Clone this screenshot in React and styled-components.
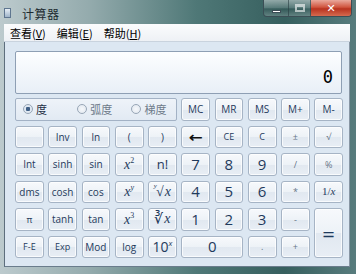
import React from 'react';
import styled, {createGlobalStyle} from 'styled-components';

const GlobalStyle = createGlobalStyle`
    html, body {
        margin: 0;
        padding: 0;
        background: #ffffff;
    }
    * {
        box-sizing: border-box;
    }
`

const Window = styled.div`
    width: 356px;
    height: 274px;
    display: flex;
    flex-direction: column;
    padding: 0 6px 7px 4px;
    background: linear-gradient(90deg, #bccacd 0%, #94abad 25%, #4f7877 55%, #365f5e 80%, #587c7d 100%);
    font-family: "Noto Sans CJK SC", "Noto Sans", sans-serif;
    overflow: hidden;
`
const TitleBar = styled.div`
    height: 24px;
    display: flex;
    align-items: flex-start;
    margin-left: -4px;
    margin-right: -6px;
`
const TitleIcon = styled.div`
    width: 7px;
    height: 10px;
    margin: 8px 0 0 4px;
    background: linear-gradient(#e6eef6, #9fb4c9);
    border: 1px solid #5f7690;
`
const TitleText = styled.div`
    margin: 5px 0 0 11px;
    font-size: 12px;
    color: #1c2a30;
    letter-spacing: 0.5px;
`
const Caption = styled.div`
    margin-left: auto;
    margin-right: 4px;
    display: flex;
    height: 17px;
    border: 1px solid #3b4e55;
    border-top: none;
    border-radius: 0 0 4px 4px;
    overflow: hidden;
`
const CaptionButton = styled.div`
    width: ${(props) => props.$w}px;
    display: flex;
    align-items: center;
    justify-content: center;
    color: #fff;
    font: bold 11px "DejaVu Sans", sans-serif;
    background: ${(props) => props.$close
        ? 'linear-gradient(#e9a99c 0%, #d0553f 45%, #b8331f 55%, #d46a4f 100%)'
        : 'linear-gradient(rgba(255,255,255,0.45) 0%, rgba(255,255,255,0.15) 50%, rgba(0,0,0,0.08) 55%, rgba(255,255,255,0.2) 100%)'};
    &:not(:last-child) {
        border-right: 1px solid rgba(40,60,65,0.6);
    }
`
const MinLine = styled.div`
    width: 9px;
    height: 3px;
    margin-top: 6px;
    background: #fff;
    border: 1px solid #3c4c55;
`
const MaxBox = styled.div`
    width: 10px;
    height: 8px;
    border: 2px solid rgba(255,255,255,0.6);
    border-top-width: 3px;
`
const MenuBar = styled.div`
    height: 18px;
    display: flex;
    align-items: center;
    padding-left: 6px;
    gap: 11px;
    background: linear-gradient(#fbfcfd, #eef1f5);
    border-bottom: 1px solid #c9d3de;
    font-size: 11px;
    color: #000;
`
const MenuItem = styled.span`
    u {
        text-decoration: underline;
        text-underline-offset: 1px;
    }
`
const Client = styled.div`
    flex: 1;
    display: flex;
    flex-direction: column;
    gap: 4px;
    padding: 9px 7px 0 10px;
    background: #dce7f2;
    border-left: 1px solid #5d6e7d;
    border-bottom: 1px solid #6a7c8c;
    border-right: 1px solid #8896a4;
`
const Display = styled.div`
    height: 43px;
    display: flex;
    align-items: flex-end;
    justify-content: flex-end;
    padding: 0 8px 6px 0;
    border: 1px solid #8e9fb4;
    border-radius: 2px;
    background: linear-gradient(#fdfeff, #e8eff7);
    font: 17px "DejaVu Sans Mono", monospace;
    color: #000;
`
const Pad = styled.div`
    display: grid;
    grid-template-columns: repeat(10, 1fr);
    grid-auto-rows: 22.5px;
    column-gap: 4.5px;
    row-gap: 5px;
    width: 328px;
`
const RadioGroup = styled.div`
    grid-column: span 5;
    display: flex;
    align-items: center;
    padding-left: 7px;
    border: 1px solid #a3b2c5;
    border-radius: 2px;
    background: linear-gradient(#eef3f9, #e2eaf3);
    font-size: 11px;
    color: #1e2f45;
`
const RadioOption = styled.label`
    display: flex;
    align-items: center;
    gap: 3px;
    width: ${(props) => props.$w}px;
    color: ${(props) => props.$on ? '#1e2f45' : '#6d7a89'};
`
const RadioDot = styled.span`
    width: 10px;
    height: 10px;
    border-radius: 50%;
    border: 1px solid #98a6b6;
    background: radial-gradient(circle, ${(props) => props.$on ? '#3f5f86 0 2px, #dfe8f2 2.5px' : '#f6f8fb 0, #dfe6ee 100%'});
`
const Key = styled.button`
    grid-column: span ${(props) => props.$cols || 1};
    grid-row: span ${(props) => props.$rows || 1};
    padding: 0;
    display: flex;
    align-items: center;
    justify-content: center;
    border: 1px solid #a6b4c5;
    border-radius: 3px;
    background: linear-gradient(#f7f9fc 0%, #edf2f7 50%, #e1e8f0 51%, #e8eef5 100%);
    box-shadow: inset 0 0 0 1px rgba(255,255,255,0.75);
    color: ${(props) => props.$dim ? '#667487' : '#1f3a5c'};
    font-family: "Open Sans", "Noto Sans", sans-serif;
    font-size: ${(props) => props.$size || 10}px;
    font-weight: ${(props) => props.$bold ? 700 : 400};
    line-height: 1;
`
const BackArrow = styled.span`
    font: bold 14px "DejaVu Sans", sans-serif;
    color: #111;
    transform: scaleX(1.2);
`
const Italic = styled.span`
    font-family: "Liberation Serif", serif;
    font-style: ${(props) => props.$plain ? 'normal' : 'italic'};
    font-size: ${(props) => props.$size || 14}px;
    color: #1f3a5c;
    sup {
        font-size: 8px;
        font-style: ${(props) => props.$upright ? 'normal' : 'italic'};
        vertical-align: 6px;
    }
`
const Root = styled.span`
    display: flex;
    align-items: baseline;
    font-family: "Liberation Serif", serif;
    font-size: 14px;
    color: #1f3a5c;
    sup {
        font-size: 7px;
        font-style: italic;
        align-self: flex-start;
        margin-top: -2px;
        margin-right: -1px;
    }
    i {
        margin-left: 1px;
    }
`
const Power = styled.span`
    font-size: 14px;
    sup {
        font-size: 8px;
        font-style: italic;
        vertical-align: 6px;
    }
`

const menu = [['查看', 'V'], ['编辑', 'E'], ['帮助', 'H']];

const App = () => {
    return (
        <>
            <GlobalStyle/>
            <Window>
                <TitleBar>
                    <TitleIcon/>
                    <TitleText>计算器</TitleText>
                    <Caption>
                        <CaptionButton $w={25}><MinLine/></CaptionButton>
                        <CaptionButton $w={22}><MaxBox/></CaptionButton>
                        <CaptionButton $w={40} $close>✕</CaptionButton>
                    </Caption>
                </TitleBar>
                <MenuBar>
                    {menu.map(([label, key]) => (
                        <MenuItem key={key}>{label}(<u>{key}</u>)</MenuItem>
                    ))}
                </MenuBar>
                <Client>
                    <Display>0</Display>
                    <Pad>
                        <RadioGroup>
                            <RadioOption $w={55} $on><RadioDot $on/>度</RadioOption>
                            <RadioOption $w={55}><RadioDot/>弧度</RadioOption>
                            <RadioOption $w={45}><RadioDot/>梯度</RadioOption>
                        </RadioGroup>
                        <Key>MC</Key>
                        <Key>MR</Key>
                        <Key>MS</Key>
                        <Key>M+</Key>
                        <Key>M-</Key>

                        <Key/>
                        <Key>Inv</Key>
                        <Key>ln</Key>
                        <Key>(</Key>
                        <Key>)</Key>
                        <Key><BackArrow>←</BackArrow></Key>
                        <Key $size={9}>CE</Key>
                        <Key $size={9}>C</Key>
                        <Key $dim $size={9}>±</Key>
                        <Key $dim $size={9}>√</Key>

                        <Key>Int</Key>
                        <Key>sinh</Key>
                        <Key>sin</Key>
                        <Key><Italic $upright>x<sup>2</sup></Italic></Key>
                        <Key $size={13}>n!</Key>
                        <Key $size={15}>7</Key>
                        <Key $size={15}>8</Key>
                        <Key $size={15}>9</Key>
                        <Key $dim $size={9}>/</Key>
                        <Key $dim $size={9}>%</Key>

                        <Key>dms</Key>
                        <Key>cosh</Key>
                        <Key>cos</Key>
                        <Key><Italic>x<sup>y</sup></Italic></Key>
                        <Key><Root><sup>y</sup>√<i>x</i></Root></Key>
                        <Key $size={15}>4</Key>
                        <Key $size={15}>5</Key>
                        <Key $size={15}>6</Key>
                        <Key $dim $size={9}>*</Key>
                        <Key><Italic $plain $size={11}>1/<i>x</i></Italic></Key>

                        <Key $size={9}>π</Key>
                        <Key>tanh</Key>
                        <Key>tan</Key>
                        <Key><Italic $upright>x<sup>3</sup></Italic></Key>
                        <Key><Root>∛<i>x</i></Root></Key>
                        <Key $size={15}>1</Key>
                        <Key $size={15}>2</Key>
                        <Key $size={15}>3</Key>
                        <Key $dim $size={9}>-</Key>
                        <Key $rows={2} $size={22}>=</Key>

                        <Key $size={9}>F-E</Key>
                        <Key $size={9}>Exp</Key>
                        <Key>Mod</Key>
                        <Key>log</Key>
                        <Key><Power>10<sup>x</sup></Power></Key>
                        <Key $cols={2} $size={15}>0</Key>
                        <Key $dim $size={9}>.</Key>
                        <Key $dim $size={9}>+</Key>
                    </Pad>
                </Client>
            </Window>
        </>
    );
};

export default App;
